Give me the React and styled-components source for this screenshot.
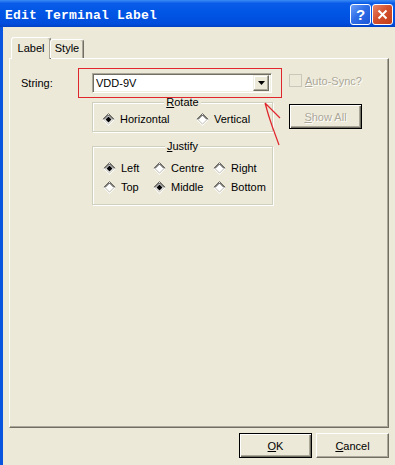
import React from 'react';
import styled, { createGlobalStyle } from 'styled-components';

const GlobalStyle = createGlobalStyle`
  html, body {
    margin: 0;
    padding: 0;
    background: #ece9d8;
  }
  body {
    font-family: "Liberation Sans", Arial, sans-serif;
    font-size: 11px;
    color: #000;
  }
`;

const Window = styled.div`
  width: 395px;
  height: 465px;
  overflow: hidden;
  background: #ece9d8;
  display: flex;
  flex-direction: column;
`;

const TitleBar = styled.div`
  height: 27px;
  flex: none;
  display: flex;
  align-items: center;
  padding: 0 2px 0 5px;
  background: linear-gradient(#3b8cf5 0%, #0a5ce8 12%, #0055e5 50%, #004cdc 88%, #0040c4 100%);
`;

const Title = styled.div`
  flex: 1;
  color: #fff;
  font-family: "Liberation Mono", "Courier New", monospace;
  font-weight: bold;
  font-size: 13px;
  letter-spacing: 0.2px;
  padding-top: 3px;
`;

const CaptionButton = styled.div`
  width: 21px;
  height: 21px;
  margin-top: 2px;
  margin-left: 1px;
  box-sizing: border-box;
  border: 1px solid #fff;
  border-radius: 3px;
  display: flex;
  align-items: center;
  justify-content: center;
  color: #fff;
  font-weight: bold;
  font-size: 15px;
  background: ${p => p.kind === 'close'
    ? 'linear-gradient(135deg, #e9876a 0%, #d4512f 45%, #c23c17 100%)'
    : 'linear-gradient(135deg, #6d9ff7 0%, #2f6ee8 45%, #1b55d6 100%)'};
`;

const Frame = styled.div`
  flex: 1;
  display: flex;
  flex-direction: column;
  border-left: 3px solid #0a55e0;
  padding: 10px 6px 0 6px;
`;

const TabRow = styled.div`
  display: flex;
  align-items: flex-end;
  height: 21px;
  padding-left: 2px;
  position: relative;
  z-index: 1;
`;

const Tab = styled.div`
  box-sizing: border-box;
  height: ${p => (p.active ? '22px' : '19px')};
  width: ${p => p.w}px;
  margin-bottom: ${p => (p.active ? '-1px' : '0')};
  margin-left: ${p => (p.active ? '0' : '-1px')};
  border: 1px solid;
  border-color: #fff #716f64 transparent #fff;
  border-bottom: none;
  border-radius: 3px 3px 0 0;
  background: #ece9d8;
  box-shadow: inset -1px 0 #aca899;
  display: flex;
  justify-content: center;
  padding-top: ${p => (p.active ? '4px' : '2px')};
`;

const Panel = styled.div`
  box-sizing: border-box;
  width: 380px;
  height: 370px;
  border: 1px solid;
  border-color: #fff #716f64 #716f64 #fff;
  box-shadow: inset -1px -1px #aca899;
  padding-top: 14px;
  position: relative;
`;

const FormRow = styled.div`
  display: flex;
  align-items: flex-start;
`;

const LabelCol = styled.div`
  width: 82px;
  box-sizing: border-box;
  padding-left: 11px;
  line-height: 20px;
`;

const MiddleCol = styled.div`
  width: 181px;
  display: flex;
  flex-direction: column;
`;

const ComboWrap = styled.div`
  position: relative;
  width: 180px;
  height: 20px;
  box-sizing: border-box;
  border: 1px solid;
  border-color: #aca899 #fff #fff #aca899;
  box-shadow: inset 1px 1px #716f64, inset -1px -1px #f1efe2;
  background: #fff;
  display: flex;
  align-items: center;
  padding: 2px 2px 2px 3px;
`;

const ComboText = styled.div`
  flex: 1;
  line-height: 14px;
`;

const DropButton = styled.div`
  width: 16px;
  height: 16px;
  box-sizing: border-box;
  background: #ece9d8;
  border: 1px solid;
  border-color: #f1efe2 #716f64 #716f64 #f1efe2;
  box-shadow: inset -1px -1px #aca899, inset 1px 1px #fff;
  display: flex;
  align-items: center;
  justify-content: center;
`;

const RedMark = styled.div`
  position: absolute;
  left: -15px;
  top: -6px;
  right: -11px;
  bottom: -6px;
  border: 1px solid #e0262c;
  pointer-events: none;
`;

const GroupBox = styled.div`
  box-sizing: border-box;
  margin-top: ${p => p.mt}px;
  height: ${p => p.h}px;
  border: 1px solid #d0d0bf;
  box-shadow: inset 1px 1px #fff, 1px 1px #fff;
`;

const Legend = styled.div`
  width: fit-content;
  margin: -7px auto 0;
  padding: 0 2px;
  height: 13px;
  line-height: 13px;
  background: #ece9d8;
`;

const RadioGrid = styled.div`
  display: grid;
  grid-template-columns: ${p => p.cols};
  row-gap: 6px;
  padding-left: ${p => p.pl}px;
  margin-top: ${p => p.mt}px;
`;

const RadioItem = styled.div`
  display: flex;
  align-items: center;
  gap: 5px;
  height: 13px;
  line-height: 13px;
`;

const RightCol = styled.div`
  margin-left: 16px;
  display: flex;
  flex-direction: column;
`;

const CheckRow = styled.div`
  margin-top: 1px;
  display: flex;
  align-items: center;
  gap: 3px;
  height: 13px;
`;

const CheckBox = styled.div`
  width: 13px;
  height: 13px;
  box-sizing: border-box;
  border: 1px solid #cac8bb;
  background: #ece9d8;
`;

const Grey = styled.span`
  color: #aca899;
  text-shadow: 1px 1px #fff;
`;

const Button = styled.div`
  box-sizing: border-box;
  width: 73px;
  height: 25px;
  margin-top: ${p => p.mt || 0}px;
  display: flex;
  align-items: center;
  justify-content: center;
  background: #ece9d8;
  border: 1px solid;
  border-color: ${p => (p.isDefault ? '#000' : '#fff #716f64 #716f64 #fff')};
  box-shadow: ${p => (p.isDefault
    ? 'inset 1px 1px #fff, inset -1px -1px #716f64, inset -2px -2px #aca899'
    : 'inset -1px -1px #aca899')};
  color: ${p => (p.disabled ? '#aca899' : '#000')};
  text-shadow: ${p => (p.disabled ? '1px 1px #fff' : 'none')};
`;

const Footer = styled.div`
  display: flex;
  justify-content: flex-end;
  gap: 4px;
  padding-top: 5px;
`;

const Arrow = styled.svg`
  position: absolute;
  left: 250px;
  top: 40px;
  pointer-events: none;
`;

function Diamond({ checked }) {
  return (
    <svg width="13" height="13" viewBox="0 0 13 13">
      <polygon points="6.5,0.5 12.5,6.5 6.5,12.5 0.5,6.5" fill="#fff" />
      <polyline points="0.5,6.5 6.5,0.5 12.5,6.5" fill="none" stroke="#716f64" />
      <polyline points="1.9,6.5 6.5,1.9 11.1,6.5" fill="none" stroke="#222" />
      <polyline points="0.5,6.5 6.5,12.5 12.5,6.5" fill="none" stroke="#fdfdfb" />
      <polyline points="1.9,6.5 6.5,11.1 11.1,6.5" fill="none" stroke="#bdb9ab" />
      {checked && <polygon points="6.5,3.5 9.5,6.5 6.5,9.5 3.5,6.5" fill="#000" />}
    </svg>
  );
}

function Radio({ label, checked }) {
  return (
    <RadioItem>
      <Diamond checked={checked} />
      <span>{label}</span>
    </RadioItem>
  );
}

export default function App() {
  return (
    <Window>
      <GlobalStyle />
      <TitleBar>
        <Title>Edit Terminal Label</Title>
        <CaptionButton>?</CaptionButton>
        <CaptionButton kind="close">
          <svg width="11" height="11" viewBox="0 0 11 11">
            <path d="M1.5 1.5 L9.5 9.5 M9.5 1.5 L1.5 9.5" stroke="#fff" strokeWidth="2" />
          </svg>
        </CaptionButton>
      </TitleBar>
      <Frame>
        <TabRow>
          <Tab active w={40}>Label</Tab>
          <Tab w={34}>Style</Tab>
        </TabRow>
        <Panel>
          <FormRow>
            <LabelCol>String:</LabelCol>
            <MiddleCol>
              <ComboWrap>
                <ComboText>VDD-9V</ComboText>
                <DropButton>
                  <svg width="7" height="4" viewBox="0 0 7 4">
                    <polygon points="0,0 7,0 3.5,4" fill="#000" />
                  </svg>
                </DropButton>
                <RedMark />
              </ComboWrap>
              <GroupBox mt={9} h={30}>
                <Legend><u>R</u>otate</Legend>
                <RadioGrid cols="94px auto" pl={9} mt={4}>
                  <Radio label="Horizontal" checked />
                  <Radio label="Vertical" />
                </RadioGrid>
              </GroupBox>
              <GroupBox mt={14} h={59}>
                <Legend><u>J</u>ustify</Legend>
                <RadioGrid cols="50px 60px auto" pl={10} mt={9}>
                  <Radio label="Left" checked />
                  <Radio label="Centre" />
                  <Radio label="Right" />
                  <Radio label="Top" />
                  <Radio label="Middle" checked />
                  <Radio label="Bottom" />
                </RadioGrid>
              </GroupBox>
            </MiddleCol>
            <RightCol>
              <CheckRow>
                <CheckBox />
                <Grey><u>A</u>uto-Sync?</Grey>
              </CheckRow>
              <Button isDefault disabled mt={17}><span><u>S</u>how All</span></Button>
            </RightCol>
          </FormRow>
          <Arrow width="30" height="60" viewBox="0 0 30 60">
            <path d="M5 4 L9 18 M5 4 L20 19 M6 7 C9 20 14 32 19 46" fill="none" stroke="#e0262c" strokeWidth="1.2" />
          </Arrow>
        </Panel>
        <Footer>
          <Button isDefault><span><u>O</u>K</span></Button>
          <Button><span><u>C</u>ancel</span></Button>
        </Footer>
      </Frame>
    </Window>
  );
}
